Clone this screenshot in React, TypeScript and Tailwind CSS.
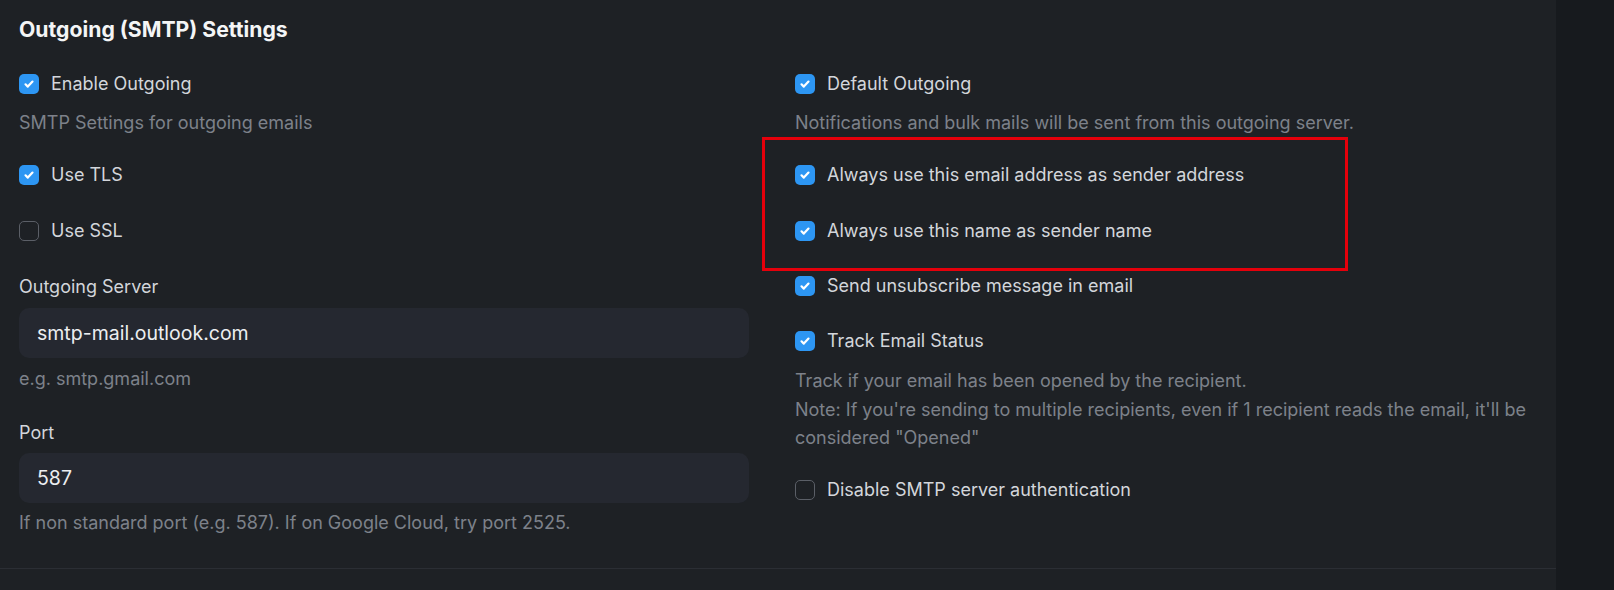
import React from 'react';

function Checkbox({ checked }: { checked: boolean }) {
  if (!checked) {
    return <span className="block w-[20px] h-[20px] shrink-0 rounded-[5px] border border-[#5b5f67]" />;
  }
  return (
    <span className="flex items-center justify-center w-[20px] h-[20px] shrink-0 rounded-[5px] bg-[#2d96f3]">
      <svg width="12" height="12" viewBox="0 0 12 12" fill="none">
        <path d="M2.5 6.3l2.3 2.3L9.5 3.6" stroke="white" strokeWidth="2.2" strokeLinecap="round" strokeLinejoin="round" />
      </svg>
    </span>
  );
}

function CheckRow({ label, checked, className }: { label: string; checked: boolean; className: string }) {
  return (
    <div className={`flex items-center gap-[12px] h-[24px] ${className}`}>
      <Checkbox checked={checked} />
      <span className="text-[18px] leading-6 text-[#d3d6db]">{label}</span>
    </div>
  );
}

export default function App() {
  return (
    <div className="flex w-full h-[590px] bg-[#171a1e] overflow-hidden" style={{ fontFamily: 'Inter, "Noto Sans", sans-serif' }}>
      <div className="w-[1556px] h-full bg-[#1e2125]">
        <div className="px-[19px] pt-[15px] pb-[33px] border-b border-[#2b2e34]">
          <h2 className="text-[21.2px] leading-7 font-bold text-[#f4f5f6]">Outgoing (SMTP) Settings</h2>

          <div className="grid grid-cols-[730px_742px] gap-x-[46px] mt-[29px]">
            {/* left column */}
            <div className="flex flex-col">
              <CheckRow label="Enable Outgoing" checked className="" />
              <p className="mt-[15px] text-[18px] leading-6 text-[#7d818a]">SMTP Settings for outgoing emails</p>
              <CheckRow label="Use TLS" checked className="mt-[28px]" />
              <CheckRow label="Use SSL" checked={false} className="mt-[32px]" />

              <label className="mt-[32px] text-[18px] leading-6 text-[#d3d6db]">Outgoing Server</label>
              <div className="mt-[9px] h-[50px] rounded-[10px] bg-[#252830] flex items-center px-[18px] pt-[1px] text-[19.5px] text-[#eceef0]">
                smtp-mail.outlook.com
              </div>
              <p className="mt-[9px] text-[18px] leading-6 text-[#7d818a]">e.g. smtp.gmail.com</p>

              <label className="mt-[30px] text-[18px] leading-6 text-[#d3d6db]">Port</label>
              <div className="mt-[8px] h-[50px] rounded-[10px] bg-[#252830] flex items-center px-[18px] pt-[1px] text-[19.5px] text-[#eceef0]">
                587
              </div>
              <p className="mt-[8px] text-[18px] leading-6 text-[#7d818a]">
                If non standard port (e.g. 587). If on Google Cloud, try port 2525.
              </p>
            </div>

            {/* right column */}
            <div className="relative flex flex-col">
              <CheckRow label="Default Outgoing" checked className="" />
              <p className="mt-[15px] text-[18px] leading-6 text-[#7d818a]">
                Notifications and bulk mails will be sent from this outgoing server.
              </p>
              <CheckRow label="Always use this email address as sender address" checked className="mt-[28px]" />
              <CheckRow label="Always use this name as sender name" checked className="mt-[32px]" />
              <CheckRow label="Send unsubscribe message in email" checked className="mt-[31px]" />
              <CheckRow label="Track Email Status" checked className="mt-[31px]" />
              <p className="mt-[14px] text-[18px] leading-[28.5px] text-[#7d818a]">
                Track if your email has been opened by the recipient.
                <br />
                Note: If you're sending to multiple recipients, even if 1 recipient reads the email, it'll be considered "Opened"
              </p>
              <CheckRow label="Disable SMTP server authentication" checked={false} className="mt-[25px]" />

              {/* highlight annotation */}
              <div className="absolute left-[-33px] top-[65px] w-[586px] h-[134px] border-[3px] border-[#e5000b] pointer-events-none" />
            </div>
          </div>
        </div>
      </div>
    </div>
  );
}
